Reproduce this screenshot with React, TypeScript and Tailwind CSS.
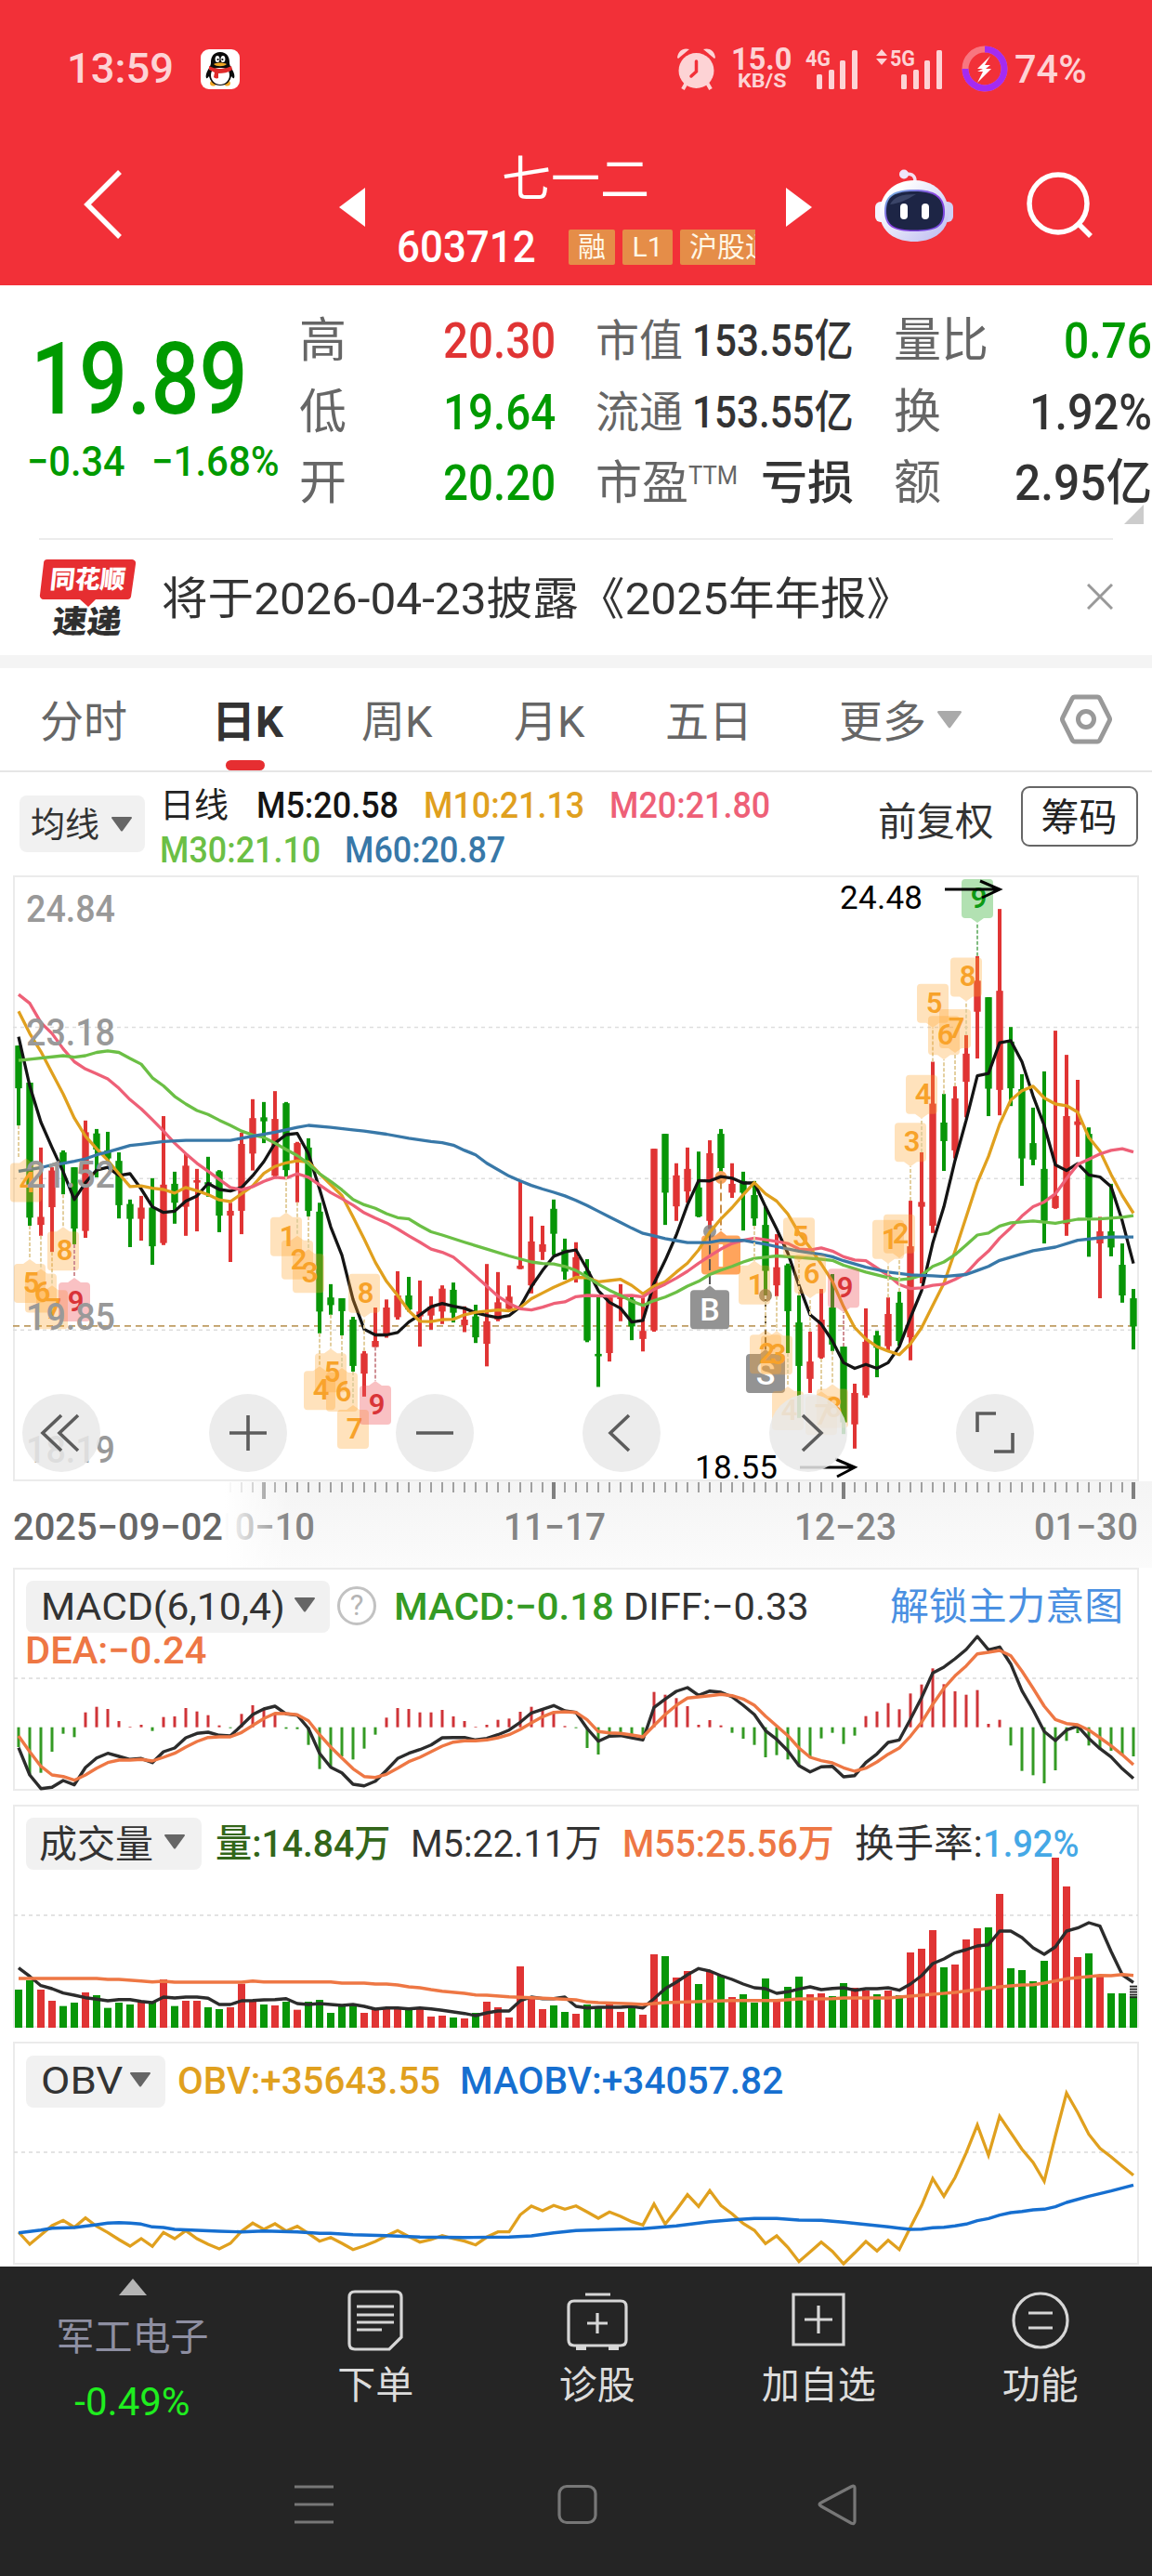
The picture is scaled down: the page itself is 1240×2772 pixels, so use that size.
import { useLayoutEffect, useRef, useState, type ReactNode } from 'react';
import clsx from 'clsx';

type Side = 'R' | 'G';
type Candle = [Side, number, number, number, number];

const RED = '#e03434';
const GREEN = '#089608';
const AMBER = '#e0a01e';

// x of the nth trading day, shared by every panel
const dayX = (i: number) => 20 + i * 12;

// ── Daily K data: side, high, low, body top, body bottom ──
const candles: Candle[] = [
  ['G', 450, 648, 450, 556], ['G', 542, 897, 542, 877], ['R', 703, 922, 875, 895], ['R', 752, 962, 760, 851],
  ['G', 710, 819, 715, 744], ['G', 752, 943, 752, 904], ['R', 636, 927, 665, 910], ['G', 657, 777, 668, 708],
  ['G', 664, 740, 710, 730], ['G', 715, 879, 736, 846], ['G', 832, 950, 843, 880], ['R', 823, 934, 852, 880],
  ['G', 779, 994, 852, 948], ['R', 625, 945, 795, 940], ['G', 763, 892, 793, 840], ['R', 718, 922, 748, 850],
  ['R', 756, 911, 784, 790], ['G', 726, 825, 789, 795], ['G', 759, 913, 762, 872], ['R', 840, 987, 860, 872],
  ['R', 666, 918, 694, 860], ['R', 583, 760, 630, 718], ['G', 590, 692, 628, 638], ['R', 563, 775, 632, 773],
  ['G', 590, 775, 593, 759], ['R', 689, 839, 692, 735], ['G', 680, 874, 703, 860], ['G', 840, 1164, 862, 1110],
  ['G', 1042, 1118, 1075, 1094], ['G', 1077, 1169, 1077, 1109], ['G', 1123, 1259, 1130, 1245], ['R', 1208, 1321, 1214, 1264],
  ['R', 1100, 1198, 1183, 1198], ['R', 1080, 1175, 1100, 1170], ['R', 1010, 1130, 1070, 1124], ['G', 1024, 1110, 1070, 1105],
  ['R', 1033, 1197, 1110, 1122], ['R', 1072, 1155, 1098, 1120], ['R', 1045, 1141, 1053, 1110], ['G', 1038, 1137, 1056, 1113],
  ['R', 1097, 1161, 1130, 1144], ['G', 1093, 1188, 1122, 1174], ['R', 992, 1246, 1134, 1190], ['R', 1012, 1134, 1087, 1130],
  ['R', 1045, 1110, 1073, 1103], ['R', 786, 1005, 996, 1004], ['R', 874, 1065, 936, 1045], ['R', 897, 982, 943, 962],
  ['G', 832, 970, 855, 917], ['G', 929, 1031, 956, 1011], ['R', 938, 1038, 975, 1025], ['G', 980, 1186, 1010, 1182],
  ['G', 1070, 1297, 1215, 1221], ['R', 1070, 1234, 1075, 1213], ['R', 1042, 1134, 1074, 1079], ['G', 1070, 1181, 1080, 1147],
  ['R', 1075, 1209, 1158, 1178], ['R', 706, 1160, 706, 1157], ['G', 669, 895, 669, 815], ['R', 742, 885, 772, 849],
  ['R', 703, 840, 756, 812], ['G', 713, 876, 802, 874], ['R', 685, 905, 717, 885], ['G', 657, 765, 669, 754],
  ['R', 742, 828, 793, 815], ['G', 763, 909, 786, 815], ['G', 786, 897, 821, 879], ['G', 850, 1070, 895, 1009],
  ['R', 918, 1072, 1000, 1045], ['G', 991, 1213, 995, 1109], ['G', 1070, 1374, 1137, 1245], ['R', 1160, 1312, 1234, 1277],
  ['R', 1054, 1227, 1130, 1224], ['G', 1017, 1208, 1100, 1192], ['G', 1197, 1414, 1197, 1385], ['R', 1289, 1450, 1312, 1390],
  ['R', 1102, 1324, 1185, 1318], ['G', 1158, 1273, 1169, 1200], ['R', 1075, 1207, 1116, 1196], ['G', 1061, 1195, 1088, 1183],
  ['R', 835, 1231, 948, 1174], ['R', 715, 1040, 838, 850], ['R', 490, 915, 594, 897], ['G', 570, 761, 641, 687],
  ['R', 551, 730, 581, 710], ['R', 424, 628, 470, 540], ['R', 228, 482, 289, 366], ['G', 330, 625, 330, 557],
  ['R', 111, 623, 314, 560], ['G', 404, 600, 440, 556], ['G', 521, 798, 558, 730], ['G', 604, 747, 692, 733],
  ['G', 514, 941, 756, 885], ['R', 413, 855, 823, 853], ['R', 473, 922, 625, 893], ['R', 535, 726, 638, 647],
  ['G', 653, 974, 669, 877], ['R', 875, 1077, 911, 941], ['G', 793, 973, 911, 951], ['G', 941, 1088, 994, 1070],
  ['G', 1054, 1204, 1077, 1147],
];

const averages = [
  { color: '#141414', data: '0:428 1:550 2:640 3:703 4:763 5:832 6:790 7:759 8:752 9:772 10:768 11:806 12:850 13:864 14:861 15:836 16:823 17:792 18:807 19:811 20:802 21:773 22:738 23:692 24:671 25:668 26:718 27:806 28:900 29:970 30:1080 31:1154 32:1168 33:1168 34:1162 35:1136 36:1118 37:1098 38:1090 39:1097 40:1102 41:1113 42:1120 43:1125 44:1120 45:1098 46:1048 47:1008 48:973 49:962 50:957 51:1005 52:1058 53:1087 54:1102 55:1136 56:1132 57:1040 58:983 59:920 60:845 61:785 62:786 63:775 64:779 65:791 66:791 67:850 68:905 69:965 70:1045 71:1118 72:1141 73:1183 74:1237 75:1251 76:1241 77:1251 78:1237 79:1197 80:1125 81:1058 82:940 83:850 84:735 85:635 86:525 87:519 88:443 89:438 90:490 91:575 92:648 93:746 94:760 95:743 96:771 97:776 98:800 99:885 100:991' },
  { color: AMBER, data: '0:365 1:420 2:465 3:518 4:570 5:630 6:675 7:706 8:735 9:768 10:800 11:798 12:804 13:807 14:816 15:802 16:810 17:820 18:833 19:837 20:818 21:798 22:767 23:750 24:741 25:736 26:739 27:768 28:795 29:822 30:875 31:930 32:988 33:1035 34:1070 35:1108 36:1134 37:1135 38:1130 39:1129 40:1118 41:1112 42:1109 43:1106 44:1108 45:1100 46:1078 47:1064 48:1050 49:1038 50:1025 51:1026 52:1036 53:1033 54:1030 55:1045 56:1066 57:1047 58:1036 59:1012 60:990 61:957 62:913 63:880 64:852 65:820 66:790 67:818 68:836 69:868 70:915 71:952 72:992 73:1035 74:1098 75:1150 76:1178 77:1197 78:1208 79:1217 80:1190 81:1150 82:1095 83:1040 84:960 85:875 86:790 87:725 88:645 89:585 90:562 91:551 92:580 93:595 94:599 95:615 96:678 97:712 98:770 99:822 100:866' },
  { color: '#ee6077', data: '0:323 1:345 2:393 3:420 4:458 5:490 6:508 7:520 8:533 9:556 10:584 11:607 12:634 13:662 14:692 15:718 16:742 17:762 18:782 19:802 20:808 21:800 22:787 23:777 24:779 25:768 26:777 27:796 28:815 29:830 30:846 31:865 32:878 33:890 34:905 35:922 36:938 37:955 38:963 39:975 40:998 41:1022 42:1047 43:1072 44:1090 45:1103 46:1106 47:1099 48:1090 49:1086 50:1073 51:1070 53:1072 55:1070 56:1074 57:1055 58:1042 59:1027 60:1010 61:990 62:972 63:955 64:941 65:933 66:928 67:932 68:936 69:941 70:955 71:957 72:952 73:960 74:974 75:982 76:984 77:1002 78:1020 79:1043 80:1053 81:1051 82:1045 83:1042 84:1030 85:1015 86:985 87:960 88:928 89:902 90:873 91:850 92:838 93:818 94:780 95:745 96:732 97:719 98:710 99:706 100:714' },
  { color: '#6bbf45', data: '0:487 1:484 4:475 5:479 6:475 7:467 8:463 9:467 10:482 11:496 12:530 13:550 14:576 15:595 16:611 17:621 18:635 19:648 20:662 21:672 22:678 23:692 24:708 25:723 26:743 27:768 28:787 29:808 30:832 31:845 32:854 33:867 34:877 35:880 36:897 37:912 38:920 40:938 42:955 44:972 46:987 47:991 48:992 49:998 50:1008 51:1024 52:1042 53:1057 54:1070 55:1084 56:1095 57:1083 58:1074 59:1062 60:1047 61:1035 62:1018 63:1007 64:998 65:987 66:978 67:975 68:972 70:976 72:980 73:983 74:995 76:1012 78:1026 79:1031 80:1028 81:1020 82:998 83:987 84:969 85:945 86:920 87:915 88:898 89:890 91:885 93:891 95:881 97:880 99:876 100:872' },
  { color: '#3878a8', data: '0:762 1:757 2:753 3:746 4:742 5:737 6:731 7:721 8:714 9:706 10:698 11:695 13:688 15:685 19:685 21:675 23:665 25:653 26:648 28:653 30:659 31:662 33:670 35:680 37:688 38:691 39:697 40:710 41:721 42:742 44:774 45:786 46:797 47:806 48:814 49:823 50:834 51:847 52:861 53:875 54:889 55:903 56:916 57:922 58:929 59:934 60:939 61:939 62:938 63:933 64:934 65:933 66:938 67:943 68:949 70:960 72:968 73:974 74:984 76:1000 78:1012 80:1019 82:1021 83:1023 85:1018 86:1008 87:998 88:983 89:975 91:959 93:950 95:933 97:927 98:925 100:925' },
];

// day, label, tip level; `up` badges sit above the candle
const badges: { i: number; n: string; tip: number; up?: boolean; tone?: 'red' | 'green' }[] = [
  { i: 0, n: '4', tip: 730 }, { i: 1, n: '5', tip: 980 }, { i: 2, n: '6', tip: 1004 }, { i: 3, n: '7', tip: 1045 },
  { i: 4, n: '8', tip: 900 }, { i: 5, n: '9', tip: 1026, tone: 'red' }, { i: 24, n: '1', tip: 864 }, { i: 25, n: '2', tip: 922 },
  { i: 26, n: '3', tip: 955 }, { i: 27, n: '4', tip: 1246 }, { i: 28, n: '5', tip: 1202 }, { i: 29, n: '6', tip: 1250 },
  { i: 30, n: '7', tip: 1342 }, { i: 31, n: '8', tip: 1125, up: true }, { i: 32, n: '9', tip: 1282, tone: 'red' },
  { i: 66, n: '1', tip: 984 }, { i: 67, n: '2', tip: 1156 }, { i: 68, n: '3', tip: 1158 }, { i: 69, n: '4', tip: 1296 },
  { i: 70, n: '5', tip: 985, up: true }, { i: 71, n: '6', tip: 1077, up: true }, { i: 72, n: '7', tip: 1308 },
  { i: 73, n: '8', tip: 1290 }, { i: 74, n: '9', tip: 1112, up: true, tone: 'red' }, { i: 78, n: '1', tip: 991, up: true },
  { i: 79, n: '2', tip: 977, up: true }, { i: 80, n: '3', tip: 750, up: true }, { i: 81, n: '4', tip: 631, up: true },
  { i: 82, n: '5', tip: 405, up: true }, { i: 83, n: '6', tip: 485, up: true }, { i: 84, n: '7', tip: 468, up: true },
  { i: 85, n: '8', tip: 340, up: true }, { i: 86, n: '9', tip: 145, up: true, tone: 'green' },
];

const badgeTone = {
  amber: { box: '#ffa62e', ink: '#f7a22a', line: '#e3cf9f' },
  red: { box: '#f0575c', ink: '#d93438', line: '#cf8f94' },
  green: { box: '#2fae2f', ink: '#0d9a14', line: '#7fbb7f' },
};

const macdBars = [900, 990, 983, 915, 857, 868, 788, 770, 777, 816, 834, 828, 848, 803, 801, 774, 785, 797, 830, 839, 793, 765, 777, 790, 841, 842, 893, 971, 965, 930, 940, 905, 860, 805, 774, 777, 788, 788, 780, 801, 816, 834, 828, 812, 808, 786, 770, 778, 792, 832, 839, 903, 924, 865, 853, 858, 870, 722, 731, 742, 768, 828, 813, 830, 854, 873, 893, 933, 926, 940, 960, 935, 872, 854, 890, 863, 800, 785, 758, 778, 727, 698, 646, 697, 720, 731, 716, 825, 812, 895, 977, 991, 1017, 975, 880, 855, 895, 905, 912, 925, 930];
const diff = [902, 990, 1034, 1030, 1008, 1022, 966, 935, 920, 930, 940, 937, 950, 915, 903, 870, 856, 852, 862, 864, 830, 795, 777, 768, 793, 797, 840, 920, 965, 983, 1020, 1025, 1010, 975, 937, 920, 908, 893, 870, 869, 869, 877, 872, 860, 845, 820, 790, 778, 766, 783, 788, 840, 881, 865, 863, 870, 877, 772, 745, 720, 708, 733, 719, 723, 738, 765, 795, 847, 875, 912, 960, 980, 964, 962, 996, 992, 950, 922, 885, 877, 810, 740, 661, 642, 615, 585, 543, 586, 577, 632, 718, 780, 850, 879, 845, 832, 872, 905, 932, 970, 1001];
const dea = [864, 915, 962, 990, 995, 1007, 990, 968, 950, 942, 942, 940, 945, 933, 920, 900, 882, 869, 867, 867, 853, 830, 808, 791, 792, 796, 815, 860, 900, 935, 970, 995, 998, 988, 968, 947, 933, 915, 897, 884, 880, 880, 877, 870, 860, 843, 822, 802, 788, 786, 788, 812, 850, 854, 856, 861, 867, 830, 795, 765, 742, 738, 734, 730, 734, 745, 765, 800, 832, 863, 903, 933, 944, 951, 967, 978, 968, 948, 923, 903, 865, 820, 762, 710, 670, 638, 599, 594, 588, 605, 655, 710, 768, 811, 824, 828, 845, 870, 896, 925, 957];

const volumes = 'G633 G603 R633 R669 G686 G675 R642 G651 G692 G675 G681 R675 G675 R600 G686 R669 R669 G690 G696 R690 R614 R668 G681 R684 G672 R698 G672 G666 G708 G686 G684 R708 R696 R692 R694 G696 R694 R720 R717 G723 R726 G708 R672 R690 R723 R558 R660 R696 G684 G705 R711 G681 G692 R681 R705 G692 R714 R519 G525 R594 R573 G615 R573 G588 R657 G648 G675 G597 R668 G624 G591 R648 R645 G654 G612 R627 R636 G648 R636 G651 R513 R501 R441 G561 R552 R471 R435 G432 R324 G564 G570 G606 G540 R207 R300 R528 G516 R591 G645 G645 G655'.split(' ');
const volM5 = '0:563 1:590 2:620 3:630 4:644 5:651 6:659 7:664 8:669 9:665 10:665 11:671 12:675 13:657 14:660 15:657 16:657 17:661 18:681 19:681 20:669 21:668 22:666 23:665 24:662 25:678 26:681 27:678 28:681 29:684 30:681 31:687 32:696 33:692 34:692 35:695 36:692 37:695 38:700 39:705 40:710 41:717 42:708 43:702 44:702 45:669 46:657 47:662 48:662 49:657 50:687 51:692 52:690 54:690 55:687 56:692 57:662 58:630 59:609 60:585 61:565 62:573 63:588 64:600 65:615 66:627 67:630 68:645 69:640 70:631 71:624 72:633 73:629 74:627 75:635 76:630 77:630 78:627 79:635 80:615 81:588 82:549 83:534 84:514 85:504 86:492 87:488 88:444 89:444 90:465 91:498 92:519 93:495 94:444 95:434 96:417 97:428 98:510 99:585 100:610';
const volM55 = '0:597 7:597 8:600 9:600 11:605 12:608 13:606 14:609 20:609 21:605 22:608 28:608 29:612 31:612 32:615 33:615 34:618 35:624 36:627 37:633 38:638 40:645 41:650 42:651 44:656 46:659 48:662 50:666 51:673 52:675 55:679 56:681 58:675 60:673 64:668 68:668 70:663 73:662 74:660 78:660 80:654 82:648 84:642 86:633 88:624 90:618 91:617 92:612 94:598 96:591 97:587 98:588 99:584 100:587';

const obv = [1416, 1455, 1425, 1395, 1378, 1400, 1370, 1397, 1417, 1440, 1461, 1437, 1462, 1417, 1437, 1411, 1437, 1455, 1470, 1452, 1413, 1387, 1407, 1389, 1412, 1397, 1420, 1445, 1433, 1452, 1472, 1460, 1446, 1428, 1411, 1430, 1448, 1440, 1427, 1437, 1445, 1457, 1432, 1415, 1415, 1360, 1332, 1347, 1330, 1342, 1331, 1351, 1371, 1351, 1365, 1382, 1393, 1325, 1390, 1345, 1295, 1333, 1282, 1330, 1357, 1388, 1410, 1453, 1428, 1465, 1511, 1480, 1448, 1478, 1518, 1483, 1446, 1477, 1442, 1472, 1400, 1330, 1243, 1300, 1240, 1160, 1070, 1168, 1042, 1095, 1148, 1191, 1252, 1105, 967, 1030, 1100, 1145, 1173, 1203, 1232];
const maObv = '0:1418 1:1414 2:1409 3:1403 5:1401 7:1392 8:1387 9:1385 10:1387 11:1390 12:1399 13:1401 14:1407 16:1410 18:1413 20:1415 22:1412 25:1415 27:1420 28:1420 30:1424 33:1427 36:1432 40:1433 44:1432 46:1428 48:1418 50:1411 54:1406 56:1405 58:1399 59:1396 61:1387 62:1382 64:1376 66:1372 68:1372 70:1377 72:1378 74:1384 76:1391 78:1399 79:1403 80:1407 81:1406 82:1402 83:1400 84:1396 85:1390 86:1379 87:1372 88:1361 89:1353 90:1349 91:1344 92:1342 93:1334 94:1320 96:1300 98:1283 100:1264';

function linePoints(data: string | number[], y: (v: number) => number) {
  const pairs =
    typeof data === 'string'
      ? data.split(' ').map((p) => p.split(':').map(Number))
      : data.map((v, i) => [i, v]);
  return pairs.map(([i, v]) => `${dayX(i)},${y(v).toFixed(1)}`).join(' ');
}

// Squeezes one line of text to the width its column gives it
function Fit({ w, className, children }: { w: number; className?: string; children: ReactNode }) {
  const ref = useRef<HTMLSpanElement>(null);
  const [scale, setScale] = useState(1);

  useLayoutEffect(() => {
    if (ref.current) setScale(w / ref.current.offsetWidth);
  }, [w]);

  return (
    <span className={clsx('inline-block shrink-0 whitespace-nowrap', className)} style={{ width: w }}>
      <span ref={ref} className="inline-block origin-left" style={{ transform: `scaleX(${scale})` }}>
        {children}
      </span>
    </span>
  );
}

function Caret({ className }: { className?: string }) {
  return (
    <svg viewBox="0 0 22 16" className={clsx('h-4 w-[22px] shrink-0', className)}>
      <path d="M1 0h20a1 1 0 0 1 .8 1.6L12 15a1.3 1.3 0 0 1-2 0L.2 1.6A1 1 0 0 1 1 0Z" fill="currentColor" />
    </svg>
  );
}

function Signal({ label, arrows }: { label: string; arrows?: boolean }) {
  return (
    <svg viewBox="0 0 74 46" className="h-[46px] w-[74px] shrink-0 overflow-visible" fill="#fdd3d5">
      {arrows && <path d="M0 9h12L6 2ZM0 12h12l-6 7Z" />}
      <text x={15} y={19.500} fontSize={24} fontWeight={700} textLength={27} lengthAdjust="spacingAndGlyphs">{label}</text>
      <rect x={27} y={29} width={6} height={16} rx={1.5} />
      <rect x={40} y={24} width={6} height={21} rx={1.5} />
      <rect x={52} y={14} width={6} height={31} rx={1.5} />
      <rect x={65} y={3} width={6} height={42} rx={1.5} />
    </svg>
  );
}

function StatusBar() {
  return (
    <div className="flex h-[148px] items-center text-[#fdd3d5]">
      <Fit w={115} className="ml-[72px] text-[45px] font-medium">13:59</Fit>
      <svg viewBox="0 0 42 43" className="ml-[29px] h-[43px] w-[42px]">
        <rect width={42} height={43} rx={9} fill="#fff" />
        <path d="M10 36c1-3 4-3 5-2l1 5c-3 1-6 1-6-3ZM32 36c-1-3-4-3-5-2l-1 5c3 1 6 1 6-3Z" fill="#f0a724" />
        <path d="M21 3c-7 0-10 5-10 11 0 3-1 4-3 8-2 3-3 7-2 9 1 1 2-1 3-2 1 5 5 10 12 10s11-5 12-10c1 1 2 3 3 2 1-2 0-6-2-9-2-4-3-5-3-8 0-6-3-11-10-11Z" fill="#0b0b0b" />
        <path d="M21 20c5 0 10 1 10 8 0 6-5 10-10 10s-10-4-10-10c0-7 5-8 10-8Z" fill="#fff" />
        <path d="M9 18c7 4 17 4 24 0l1 4c-4 3-10 4-15 4v5c-2 1-4 0-5-1l1-5-6-3Z" fill="#df2a2a" />
        <ellipse cx={18} cy={10.500} rx={2.400} ry={3.500} fill="#fff" />
        <ellipse cx={24} cy={10.500} rx={2.400} ry={3.500} fill="#fff" />
        <circle cx={18.600} cy={11} r={1.100} />
        <circle cx={23.400} cy={11} r={1.100} />
        <path d="M14 16c4-2 10-2 14 0-3 3-11 3-14 0Z" fill="#f0a724" />
      </svg>
      <svg viewBox="0 0 44 46" className="ml-[470px] h-[46px] w-11">
        <path d="M11 38 7 45M33 38l4 7" stroke="#fdd3d5" strokeWidth={4} />
        <circle cx={21.500} cy={25} r={19} fill="#fdd3d5" />
        <path d="M1 11C2 4 7 0 14 2L2 12ZM29 2c7-2 12 2 13 9l-1 1Z" fill="#fdd3d5" />
        <path d="M21.500 15v11L16 31" fill="none" stroke="#f23038" strokeWidth={3.500} strokeLinecap="round" />
      </svg>
      <div className="-mt-0.5 ml-4 flex w-[63px] flex-col items-center">
        <Fit w={65} className="text-[34px] leading-[27px] font-bold">15.0</Fit>
        <Fit w={52} className="text-[21px] leading-5 font-bold">KB/S</Fit>
      </div>
      <div className="ml-px"><Signal label="4G" /></div>
      <div className="ml-[17px]"><Signal label="5G" arrows /></div>
      <svg viewBox="0 0 50 50" className="ml-[18px] h-[50px] w-[50px]">
        <circle cx={25} cy={25} r={21} fill="none" stroke="#f87680" strokeWidth={7} />
        <path d="M25 4A21 21 0 1 1 4 25" fill="none" stroke="#a42bf2" strokeWidth={7} />
        <path d="M31 11 17 25h6l-6 3h6l-6 12 15-15h-6l5-4h-6Z" fill="#fff" />
      </svg>
      <Fit w={78} className="ml-[7px] text-[42px] font-medium">74%</Fit>
    </div>
  );
}

function TitleBar() {
  return (
    <div className="flex h-[146px] items-center text-white">
      <svg viewBox="0 0 44 76" className="-mt-0.5 ml-[89px] h-[76px] w-11" fill="none" stroke="currentColor" strokeWidth={5.500}>
        <path d="M40 3 5 38l35 35" />
      </svg>
      <svg viewBox="0 0 28 42" className="mt-1 ml-[232px] h-[42px] w-7">
        <path d="M28 0v42L0 21Z" fill="currentColor" />
      </svg>
      <div className="flex w-[453px] flex-col self-start pt-4">
        <h1 className="text-center text-[53px] leading-[60px]">七一二</h1>
        <div className="mt-[23px] ml-[34px] flex h-[38px] items-center">
          <Fit w={150} className="text-[48px] leading-none font-medium">603712</Fit>
          <div className="ml-[35px] flex w-[201px] gap-2 overflow-hidden text-[30px] leading-[38px] text-[#fff7e6]">
            <span className="w-[50px] shrink-0 rounded-xs bg-[#e58d48] text-center">融</span>
            <span className="w-[54px] shrink-0 rounded-xs bg-[#e58d48] text-center">L1</span>
            <span className="shrink-0 rounded-xs bg-[#e58d48] px-2.5">沪股通</span>
          </div>
        </div>
      </div>
      <svg viewBox="0 0 28 42" className="mt-1 h-[42px] w-7">
        <path d="M0 0v42l28-21Z" fill="currentColor" />
      </svg>
      <svg viewBox="0 0 84 78" className="ml-[68px] h-[78px] w-[84px]">
        <defs>
          <linearGradient id="shell" x1="0" y1="0" x2="1" y2="1">
            <stop offset="0.2" stopColor="#fff" />
            <stop offset="1" stopColor="#b9b8f0" />
          </linearGradient>
          <linearGradient id="visor" x1="0" y1="0" x2="1" y2="1">
            <stop offset="0" stopColor="#6fc4e0" />
            <stop offset="0.5" stopColor="#8a3fe0" />
            <stop offset="1" stopColor="#6d4bdc" />
          </linearGradient>
        </defs>
        <path d="M31 6c7-2 12 0 12 7" fill="none" stroke="#f4dff0" strokeWidth={3.500} />
        <circle cx={31} cy={5.500} r={5} fill="#efe6fb" />
        <rect x={0} y={35} width={14} height={22} rx={6} fill="#f3f2fd" />
        <rect x={70} y={35} width={14} height={22} rx={6} fill="#cfd0f5" />
        <path d="M42 12c22 0 37 15 37 35 0 19-15 31-37 31S5 66 5 47c0-20 15-35 37-35Z" fill="url(#shell)" />
        <path d="M42 22c22 0 33 7 33 24S64 67 42 67 10 62 10 45s10-23 32-23Z" fill="url(#visor)" />
        <path d="M42 24c21 0 31 6 31 22S63 65.500 42 65.500 12 61 12 45s9-21 30-21Z" fill="#1d2545" />
        <path d="M16 38c4-8 12-11 28-11-8 5-18 10-28 11Z" fill="#3b4568" />
        <rect x={27} y={37} width={8} height={17} rx={4} fill="#fff" />
        <rect x={50} y={37} width={8} height={17} rx={4} fill="#fff" />
      </svg>
      <svg viewBox="0 0 72 72" className="ml-[79px] h-[72px] w-[72px]" fill="none" stroke="currentColor" strokeWidth={5.500}>
        <circle cx={34} cy={34} r={31} />
        <path d="m56 56 13 13" />
      </svg>
    </div>
  );
}

function QuoteRow({ label, children }: { label: ReactNode; children: ReactNode }) {
  return (
    <div className="flex h-[76.5px] items-center justify-between text-[#333]">
      <span className="flex whitespace-nowrap text-[#666]">{label}</span>
      {children}
    </div>
  );
}

function Quote() {
  return (
    <section className="relative flex h-[272px]">
      <div className="w-[322px] shrink-0 text-[#009a00]">
        <Fit w={234} className="mt-[45px] ml-[33px] text-[108px] leading-[112px] font-medium">19.89</Fit>
        <div className="mt-2 ml-[29px] flex text-[45px] leading-[50px] font-medium">
          <Fit w={106}>−0.34</Fit>
          <Fit w={138} className="ml-7">−1.68%</Fit>
        </div>
      </div>
      <div className="w-[276px] shrink-0 pt-[22px] text-[51px] leading-[76px]">
        <QuoteRow label="高"><Fit w={121} className="text-[53px] font-medium text-[#e03434]">20.30</Fit></QuoteRow>
        <QuoteRow label="低"><Fit w={121} className="text-[53px] font-medium text-[#009a00]">19.64</Fit></QuoteRow>
        <QuoteRow label="开"><Fit w={121} className="text-[53px] font-medium text-[#009a00]">20.20</Fit></QuoteRow>
      </div>
      <div className="ml-[43px] w-[278px] shrink-0 pt-[22px] text-[47px] leading-[76px]">
        <QuoteRow label="市值"><Fit w={174} className="text-[48px] font-medium">153.55亿</Fit></QuoteRow>
        <QuoteRow label="流通"><Fit w={174} className="text-[48px] font-medium">153.55亿</Fit></QuoteRow>
        <QuoteRow
          label={
            <>
              <span className="text-[50px]">市盈</span>
              <Fit w={53} className="-mt-2 text-[28px]">TTM</Fit>
            </>
          }
        >
          <span className="text-[50px] font-medium">亏损</span>
        </QuoteRow>
      </div>
      <div className="ml-[43px] w-[278px] shrink-0 pt-[22px] text-[51px] leading-[76px]">
        <QuoteRow label="量比"><Fit w={95} className="text-[53px] font-medium text-[#009a00]">0.76</Fit></QuoteRow>
        <QuoteRow label="换"><Fit w={132} className="text-[53px] font-medium">1.92%</Fit></QuoteRow>
        <QuoteRow label="额"><Fit w={148} className="text-[53px] font-medium">2.95亿</Fit></QuoteRow>
      </div>
      <svg viewBox="0 0 21 21" className="absolute right-[9px] bottom-[15px] h-[21px] w-[21px]">
        <path d="M21 0v21H0Z" fill="#ccc" />
      </svg>
    </section>
  );
}

function Notice() {
  return (
    <section className="mx-[42px] flex h-[126px] items-center border-t-2 border-[#ececec]">
      <div className="relative mt-0.5 flex h-[84px] w-[104px] shrink-0 flex-col items-center">
        <svg viewBox="0 0 104 52" className="absolute inset-x-0 top-0 h-[52px] w-[104px]">
          <path d="M9 0h91a4 4 0 0 1 4 5l-5 35a4 4 0 0 1-4 3H61l-8 8-9-8H5a4 4 0 0 1-4-5L5 4a4 4 0 0 1 4-4Z" fill="#e62e31" />
        </svg>
        <span className="relative -skew-x-6 text-[27px] leading-[45px] font-black text-white">同花顺</span>
        <Fit w={74} className="relative mt-1 -skew-x-6 text-[34px] leading-9 font-black text-[#2f2f2f]">速递</Fit>
      </div>
      <Fit w={808} className="mt-1 ml-[28px] text-[48px] text-[#333]">将于2026-04-23披露《2025年年报》</Fit>
      <svg viewBox="0 0 28 28" className="-mt-0.5 ml-auto h-7 w-7" stroke="#999" strokeWidth={3}>
        <path d="m1 1 26 26M27 1 1 27" />
      </svg>
    </section>
  );
}

function Tabs() {
  return (
    <nav className="relative flex h-[112px] items-center border-b-2 border-[#e6e6e6] text-[47px] whitespace-nowrap text-[#666]">
      <span className="mt-1.5 ml-[43px] w-[185px]">分时</span>
      <span className="mt-1.5 w-[161px] font-bold text-[#333]">日K</span>
      <span className="mt-1.5 w-[164px]">周K</span>
      <span className="mt-1.5 w-[163px]">月K</span>
      <span className="mt-1.5 w-[187px]">五日</span>
      <span className="mt-1.5">更多</span>
      <Caret className="ml-3 h-[21px]! w-[26px]! text-[#aaa]" />
      <svg viewBox="0 0 56 54" className="ml-[106px] h-[54px] w-14" fill="none" stroke="#999" strokeWidth={5}>
        <path d="M16 3h24q2 0 3 2l10 20q1 2 0 4L43 49q-1 2-3 2H16q-2 0-3-2L3 29q-1-2 0-4L13 5q1-2 3-2Z" />
        <circle cx={28} cy={27} r={8.500} />
      </svg>
      <span className="absolute bottom-0 left-[243px] h-[11px] w-[42px] rounded-full bg-[#e62e31]" />
    </nav>
  );
}

function Legend() {
  return (
    <div className="flex h-[112px] text-[39px] leading-[48px] font-medium">
      <button className="mt-[25px] ml-[21px] flex h-[61px] w-[135px] items-center rounded-lg bg-[#f1f1f1] pl-3 text-[37px] font-normal text-[#333]">
        <span className="mt-1">均线</span>
        <Caret className="ml-[13px] text-[#666]" />
      </button>
      <div className="mt-3 ml-4 w-[700px]">
        <div className="flex h-12">
          <span className="mt-px w-[104px] text-[37px] font-normal text-[#222]">日线</span>
          <Fit w={153} className="text-[#141414]">M5:20.58</Fit>
          <Fit w={173} className="ml-[27px] text-[#e0a01e]">M10:21.13</Fit>
          <Fit w={173} className="ml-[27px] text-[#ee6077]">M20:21.80</Fit>
        </div>
        <div className="flex h-12">
          <Fit w={173} className="text-[#6bbf45]">M30:21.10</Fit>
          <Fit w={173} className="ml-[26px] text-[#3878a8]">M60:20.87</Fit>
        </div>
      </div>
      <span className="mt-[30px] ml-[73px] text-[41.500px] font-normal whitespace-nowrap text-[#333]">前复权</span>
      <button className="mt-[15px] ml-[29px] h-[65px] w-[126px] rounded-[9px] border-2 border-[#666] pt-0.5 text-[41px] leading-[60px] font-normal text-[#222]">
        筹码
      </button>
    </div>
  );
}

const kY = (v: number) => v / 2.306 - 13;

function Badge({ i, n, tip, up, tone = 'amber' }: { i: number; n: string; tip: number; up?: boolean; tone?: 'amber' | 'red' | 'green' }) {
  const c = badgeTone[tone];
  const day = dayX(i);
  // keeps the first badge inside the plot
  const x = Math.max(day, 28);
  const y = kY(tip);
  const top = up ? y - 47 : y + 5;
  return (
    <g>
      <line x1={day} x2={day} y1={kY(up ? candles[i][1] : candles[i][2])} y2={y} stroke={c.line} strokeWidth={2} strokeDasharray="4 2" />
      <g fill={c.box} fillOpacity={tone === 'amber' ? 0.32 : 0.37}>
        <path
          d={
            up
              ? `M${x - 13} ${top}h26a4 4 0 0 1 4 4v34a4 4 0 0 1-4 4h-6l-7 5-7-5h-6a4 4 0 0 1-4-4v-34a4 4 0 0 1 4-4Z`
              : `M${x - 13} ${top}h6l7-5 7 5h6a4 4 0 0 1 4 4v34a4 4 0 0 1-4 4h-26a4 4 0 0 1-4-4v-34a4 4 0 0 1 4-4Z`
          }
        />
      </g>
      <text x={x + 1.500} y={top + 31} fontSize={31} fontWeight={600} textAnchor="middle" fill={c.ink}>{n}</text>
    </g>
  );
}

function Flag({ x, y, fill, label }: { x: number; y: number; fill: string; label: string }) {
  return (
    <g>
      <path d={`M${x - 17} ${y + 5}h11l6-5 6 5h11a4 4 0 0 1 4 4v34a4 4 0 0 1-4 4h-34a4 4 0 0 1-4-4v-34a4 4 0 0 1 4-4Z`} fill={fill} />
      <text x={x} y={y + 38} fontSize={34} fontWeight={500} textAnchor="middle" fill="#fff">{label}</text>
    </g>
  );
}

function KChart() {
  const labels: [string, number][] = [['24.84', 49], ['23.18', 182], ['21.52', 335], ['19.85', 488], ['18.19', 631]];
  return (
    <section className="relative h-[651px]">
      <svg viewBox="0 0 1240 651" className="block h-[651px] w-full overflow-visible">
        <rect x={15} y={0} width={1210} height={650} fill="none" stroke="#ebebeb" strokeWidth={2} />
        {[404.500, 780, 1156].map((v) => (
          <line key={v} x1={14} x2={1226} y1={kY(v)} y2={kY(v)} stroke="#dedede" strokeWidth={1.500} strokeDasharray="4 4" />
        ))}
        <line x1={14} x2={1226} y1={kY(1146)} y2={kY(1146)} stroke="#bf9c62" strokeWidth={1.800} strokeDasharray="7 5" />

        <Flag x={764} y={kY(1045)} fill="#939393" label="B" />
        <Flag x={824} y={kY(1204)} fill="#939393" label="S" />

        {candles.map(([side, high, low, top, bottom], i) => (
          <g key={i} fill={side === 'R' ? RED : GREEN}>
            <rect x={dayX(i) - 2} y={kY(high)} width={4} height={kY(low) - kY(high)} />
            <rect x={dayX(i) - 3.700} y={kY(top)} width={7.400} height={kY(bottom) - kY(top)} />
          </g>
        ))}

        <Flag x={776} y={kY(910)} fill="#ffa45c" label="I" />
        <ellipse cx={776} cy={kY(777)} rx={6.500} ry={7} fill="#f7a15a" />
        <line x1={776} x2={776} y1={kY(785)} y2={kY(908)} stroke="#c98d45" strokeWidth={2} strokeDasharray="9 4" />
        <circle cx={764} cy={kY(911)} r={7} fill="#808080" fillOpacity={0.8} />
        <line x1={764} x2={764} y1={kY(911)} y2={kY(1045)} stroke="#555" strokeWidth={2} strokeDasharray="12 3" />
        <circle cx={824} cy={kY(1070)} r={7} fill="#7c6c48" fillOpacity={0.75} />
        <line x1={824} x2={824} y1={kY(1070)} y2={kY(1204)} stroke="#6b5a3c" strokeWidth={2} strokeDasharray="6 3" />

        {averages.map(({ color, data }) => (
          <polyline key={color} points={linePoints(data, kY)} fill="none" stroke={color} strokeWidth={3.300} strokeLinejoin="round" />
        ))}

        {badges.map((b) => <Badge key={b.i} {...b} />)}

        {labels.map(([text, y]) => (
          <text key={text} x={28} y={y} fontSize={41} fontWeight={500} fill="#999" textLength={96} lengthAdjust="spacingAndGlyphs">{text}</text>
        ))}

        <g fontSize={35} fill="#000">
          <text x={904} y={35} textLength={89}>24.48</text>
          <text x={748} y={648} textLength={89}>18.55</text>
        </g>
        <path d="M1017 14h57M1055 5l21 9-19 9" fill="none" stroke="#000" strokeWidth={3} />
        <path d="M861 636h57M899 627l21 9-19 10" fill="none" stroke="#000" strokeWidth={3} />
      </svg>

      {/* Floating zoom and pan controls */}
      <div className="absolute top-[557px] left-6 flex gap-[117px]">
        {[
          'M42 23 22 42l20 19M60 23 40 42l20 19',
          'M22 42h40M42 23v38',
          'M22 42h40',
          'M50 23 30 42l20 19',
          'M36 23l20 19-20 19',
          'M23 41V21h20M61 42v20H41',
        ].map((d) => (
          <button key={d} className="h-[84px] w-[84px] rounded-full bg-[#e9e9e9]/85">
            <svg viewBox="0 0 84 84" fill="none" stroke="#5c5c5c" strokeWidth={3.600}>
              <path d={d} />
            </svg>
          </button>
        ))}
      </div>
    </section>
  );
}

function DateAxis() {
  const ticks = Array.from({ length: 82 }, (_, k) => k + 19);
  const major = [22, 48, 74, 100];
  return (
    <svg viewBox="0 0 1240 93" className="block h-[93px] w-full bg-linear-to-b from-[#f4f4f4] to-[#fbfbfb]">
      <defs>
        <linearGradient id="fade">
          <stop offset="0.78" stopColor="#fff" />
          <stop offset="1" stopColor="#fff" stopOpacity="0" />
        </linearGradient>
      </defs>
      {ticks.map((i) => (
        <rect key={i} x={dayX(i) - (major.includes(i) ? 2 : 1)} y={1} width={major.includes(i) ? 4 : 2} height={major.includes(i) ? 18 : 11} fill={major.includes(i) ? '#808080' : '#a0a0a0'} />
      ))}
      <g fontSize={40} fontWeight={500} fill="#858585">
        <text x={231} y={63} textLength={108} lengthAdjust="spacingAndGlyphs">10−10</text>
        <text x={542} y={63} textLength={110} lengthAdjust="spacingAndGlyphs">11−17</text>
        <text x={855} y={63} textLength={110} lengthAdjust="spacingAndGlyphs">12−23</text>
        <text x={1113} y={63} textLength={112} lengthAdjust="spacingAndGlyphs">01−30</text>
      </g>
      <rect width={310} height={93} fill="url(#fade)" />
      <text x={14} y={63} fontSize={40} fontWeight={500} fill="#666" textLength={226} lengthAdjust="spacingAndGlyphs">2025−09−02</text>
    </svg>
  );
}

function Panel({ height, children }: { height: number; children: ReactNode }) {
  return (
    <svg viewBox={`0 0 1240 ${height}`} className="absolute inset-0 h-full w-full">
      <rect x={15} y={1} width={1210} height={238} fill="none" stroke="#ebebeb" strokeWidth={2} />
      <line x1={15} x2={1225} y1={119} y2={119} stroke="#dadada" strokeWidth={1.500} strokeDasharray="4 4" />
      {children}
    </svg>
  );
}

function Macd() {
  const y = (v: number) => v / 3 - 107;
  return (
    <section className="relative h-[255px] text-[41px]">
      <Panel height={255}>
        {macdBars.map((v, i) => (
          <rect key={i} x={dayX(i) - 1.500} y={Math.min(y(v), y(836))} width={3} height={Math.abs(y(v) - y(836))} fill={v < 836 ? '#cf3438' : '#349a24'} />
        ))}
        <polyline points={linePoints(diff, y)} fill="none" stroke="#2c2c2c" strokeWidth={3.400} strokeLinejoin="round" />
        <polyline points={linePoints(dea, y)} fill="none" stroke="#ee7744" strokeWidth={3.400} strokeLinejoin="round" />
      </Panel>
      <div className="relative flex h-[71px] items-center pt-[13px] leading-[58px]">
        <button className="ml-7 flex h-14 w-[327px] items-center rounded-lg bg-[#f1f1f1] pl-[11px] text-[#333]">
          <Fit w={263}>MACD(6,10,4)</Fit>
          <Caret className="ml-[15px] -mt-1 text-[#666]" />
        </button>
        <span className="-mt-0.5 ml-2 h-[42px] w-[42px] rounded-full border-3 border-[#c2c2c2] text-center text-[31px] leading-9 text-[#b5b5b5]">?</span>
        <Fit w={237} className="ml-[19px] font-medium text-[#349a24]">MACD:−0.18</Fit>
        <Fit w={200} className="ml-2.5 text-[#333]">DIFF:−0.33</Fit>
        <Fit w={251} className="ml-[87px] text-[#4a90e2]">解锁主力意图</Fit>
      </div>
      <div className="relative -mt-[5px] flex pl-[27px] leading-[46px]">
        <Fit w={195} className="font-medium text-[#ee7744]">DEA:−0.24</Fit>
      </div>
    </section>
  );
}

function Volume() {
  const y = (v: number) => v / 3 - 12;
  return (
    <section className="relative h-[255px] text-[41px]">
      <Panel height={255}>
        {volumes.map((v, i) => (
          <rect key={i} x={dayX(i) - 4} y={y(Number(v.slice(1)))} width={8} height={y(756) - y(Number(v.slice(1)))} fill={v[0] === 'R' ? RED : GREEN} />
        ))}
        {[620, 629, 638, 647, 655].map((v) => (
          <rect key={v} x={1216} y={y(v)} width={8} height={1.800} fill="#222" />
        ))}
        <polyline points={linePoints(volM5, y)} fill="none" stroke="#2c2c2c" strokeWidth={3.400} strokeLinejoin="round" />
        <polyline points={linePoints(volM55, y)} fill="none" stroke="#ee7744" strokeWidth={3.400} strokeLinejoin="round" />
      </Panel>
      <div className="relative flex items-center pt-[13px] leading-[58px]">
        <button className="ml-7 flex h-14 w-[189px] items-center rounded-lg bg-[#f1f1f1] pl-3.5 text-[#333]">
          <span className="mt-0.5">成交量</span>
          <Caret className="ml-3 -mt-1 text-[#666]" />
        </button>
        <Fit w={188} className="ml-[15px] font-medium text-[#33661a]">量:14.84万</Fit>
        <Fit w={206} className="ml-[22px] text-[#333]">M5:22.11万</Fit>
        <Fit w={228} className="ml-[22px] font-medium text-[#ee7744]">M55:25.56万</Fit>
        <Fit w={138} className="ml-[22px] text-[#333]">换手率:</Fit>
        <Fit w={104} className="font-medium text-[#45a8e6]">1.92%</Fit>
      </div>
    </section>
  );
}

function Obv() {
  const y = (v: number) => v / 3 - 267;
  return (
    <section className="relative h-[242px] text-[41px]">
      <Panel height={242}>
        <polyline points={linePoints(obv, y)} fill="none" stroke={AMBER} strokeWidth={3.300} />
        <polyline points={linePoints(maObv, y)} fill="none" stroke="#166fd0" strokeWidth={3.400} strokeLinejoin="round" />
      </Panel>
      <div className="relative flex items-center pt-[13px] leading-[59px]">
        <button className="ml-7 flex h-14 w-[150px] items-center rounded-lg bg-[#f1f1f1] pl-3 text-[#333]">
          <Fit w={88}>OBV</Fit>
          <Caret className="ml-3 -mt-1 text-[#666]" />
        </button>
        <Fit w={283} className="ml-[13px] font-medium text-[#e0a01e]">OBV:+35643.55</Fit>
        <Fit w={348} className="ml-[21px] font-medium text-[#166fd0]">MAOBV:+34057.82</Fit>
      </div>
    </section>
  );
}

function Action({ label, children }: { label: string; children: ReactNode }) {
  return (
    <button className="flex w-[238.500px] flex-col items-center">
      <svg viewBox="0 0 66 66" className="mt-[25px] h-[66px] w-[66px]" fill="none" stroke="#d6d6d6" strokeWidth={3.200}>
        {children}
      </svg>
      <span className="mt-[9px] text-[41px] leading-[56px] text-[#dcdcdc]">{label}</span>
    </button>
  );
}

function BottomBar() {
  return (
    <footer className="h-[333px] bg-[#252525]">
      <div className="flex h-[200px]">
        <div className="flex w-[285px] flex-col items-center pt-[13px]">
          <svg viewBox="0 0 30 18" className="h-[18px] w-[30px]"><path d="M15 0 30 18H0Z" fill="#b5b5b5" /></svg>
          <span className="mt-[19px] text-[41px] leading-[52px] text-[#8e8fa2]">军工电子</span>
          <span className="mt-[17px] text-[42px] leading-[54px] text-[#1fee1f]">-0.49%</span>
        </div>
        <Action label="下单">
          <path d="M11 2h44q6 0 6 6v43L48 64H11q-6 0-6-6V8q0-6 6-6Z" />
          <path d="M13 18h40M13 27h40M13 35h40M13 43h27" />
        </Action>
        <Action label="诊股">
          <path d="M20 5h27M8 12h50q6 0 6 6v36q0 6-6 6H8q-6 0-6-6V18q0-6 6-6ZM33 25v22M22 36h22" />
          <path d="M10 63h11M45 63h11" strokeWidth={4} />
        </Action>
        <Action label="加自选">
          <path d="M6 5h54v54H6ZM33 17v30M18 32h30" />
        </Action>
        <Action label="功能">
          <circle cx={33} cy={33} r={29} />
          <path d="M20 25h26M20 41h26" />
        </Action>
      </div>
      <svg viewBox="0 0 1240 80" className="block h-20 w-full" fill="none" stroke="#777" strokeWidth={3.200}>
        <path d="M317 37h42M317 56h42M317 75h42" />
        <rect x={602} y={36.500} width={39} height={39} rx={8} />
        <path d="M916 37 884 54q-4 2 0 4l32 18q4 2 4-2V38q0-3-4-1Z" />
      </svg>
    </footer>
  );
}

export default function App() {
  return (
    <main className="w-[1240px] overflow-hidden bg-white font-['Roboto','Noto_Sans_CJK_SC',sans-serif]">
      <header className="h-[307px] bg-[#f23038]">
        <StatusBar />
        <TitleBar />
      </header>
      <Quote />
      <Notice />
      <div className="h-3.5 bg-[#f4f4f4]" />
      <Tabs />
      <Legend />
      <KChart />
      <DateAxis />
      <Macd />
      <Volume />
      <Obv />
      <BottomBar />
    </main>
  );
}
